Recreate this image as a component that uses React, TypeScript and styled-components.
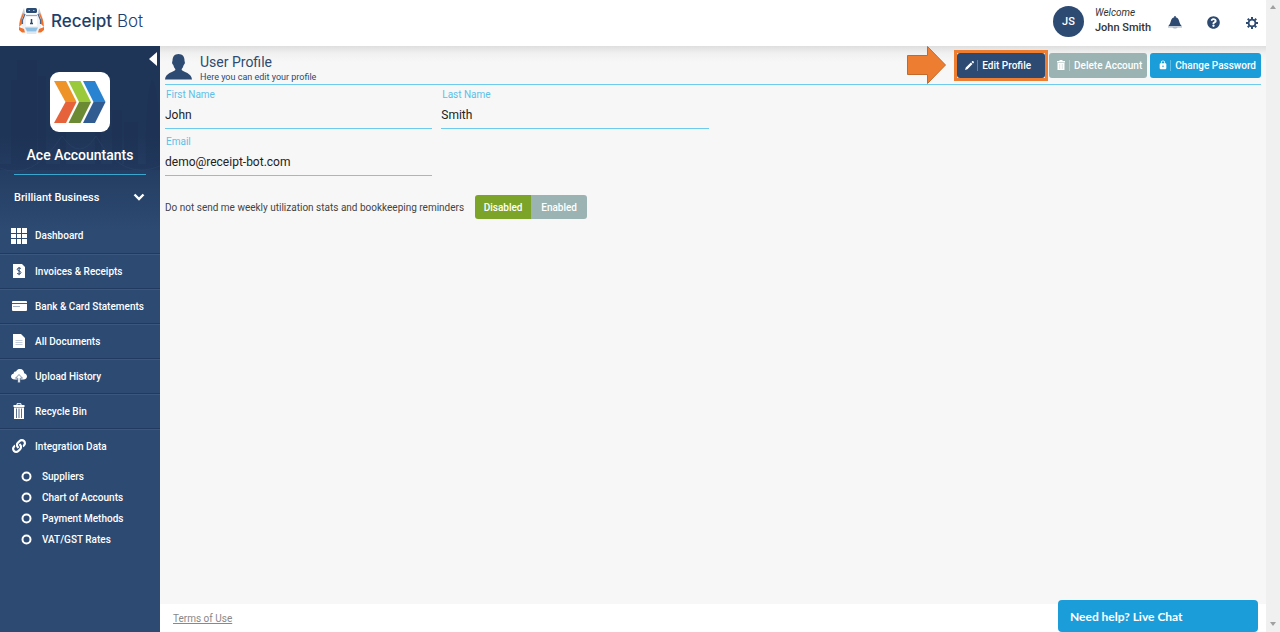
import React, { useState } from "react";
import styled, { createGlobalStyle } from "styled-components";
import { FaLink, FaQuestionCircle } from "react-icons/fa";
import { MdLock } from "react-icons/md";

const color = {
  navy: "#2d4a72",
  deep: "#1f3558",
  sky: "#6fcbee",
  blue: "#1b9dd9",
  sage: "#9bb3b3",
  green: "#7ba428",
  orange: "#ed7d31",
};

const Global = createGlobalStyle`
  *, *::before, *::after { box-sizing: border-box; }
  body { margin: 0; font-family: Roboto, "Liberation Sans", sans-serif; font-size: 10px; color: #333; background: #fff; }
  button, input { font: inherit; }
  button { cursor: pointer; }
  ul { list-style: none; margin: 0; padding: 0; }
  a { color: inherit; text-decoration: none; }
  svg { display: block; flex: none; }
`;

const Shell = styled.div`
  display: flex;
  min-height: 100vh;
`;
const Page = styled.div`
  flex: 1;
  min-width: 0;
  display: flex;
  flex-direction: column;
`;
const ScrollTrack = styled.div`
  width: 14px;
  background: #f0f0f0;
  display: flex;
  flex-direction: column;
  justify-content: space-between;
  align-items: center;
  padding: 5px 0 6px;
`;
const Header = styled.header`
  height: 46px;
  display: flex;
  align-items: center;
  justify-content: space-between;
  padding: 0 8px 0 18px;
  background: #fff;
`;
const Brand = styled.a`
  display: flex;
  align-items: center;
  gap: 6px;
  padding-bottom: 4px;
  font-family: Inter, Roboto, sans-serif;
  font-size: 17px;
  line-height: 20px;
  font-weight: 300;
  color: #243e6b;
`;
const Strong = styled.span`
  font-weight: 500;
`;
const Account = styled.div`
  display: flex;
  align-items: center;
  padding-bottom: 3px;
`;
const Avatar = styled.div`
  width: 31px;
  height: 31px;
  border-radius: 50%;
  background: ${color.navy};
  color: #fff;
  display: grid;
  place-items: center;
  font-size: 11px;
  font-weight: 500;
  margin-right: 11px;
`;
const Greeting = styled.div`
  width: 73px;
  padding-bottom: 3px;
  font-size: 11px;
  font-weight: 500;
  line-height: 15px;
`;
const Welcome = styled.div`
  font-size: 10px;
  font-weight: 400;
  font-style: italic;
`;
const HeaderIcons = styled.div`
  display: flex;
  gap: 24px;
  padding-top: 2px;
`;
const IconButton = styled.button`
  width: 14px;
  height: 24px;
  padding: 0;
  border: 0;
  background: none;
  color: ${color.navy};
  display: grid;
  place-items: center end;
`;

const Body = styled.div`
  flex: 1;
  display: flex;
`;
const Sidebar = styled.aside`
  position: relative;
  width: 160px;
  flex: none;
  background: linear-gradient(${color.deep} 0, ${color.deep} 90px, ${color.navy} 184px);
  color: #fff;
  font-weight: 500;
`;
const Skyline = styled.svg`
  position: absolute;
  top: 0;
  left: 0;
`;
const Collapse = styled.button`
  position: absolute;
  top: 6px;
  right: 2px;
  padding: 0;
  border: 0;
  background: none;
`;
const Company = styled.div`
  position: relative;
  margin: 0 14px;
  padding: 26px 0 10px;
  display: flex;
  flex-direction: column;
  align-items: center;
  gap: 14px;
  border-bottom: 1px solid #3aa6d0;
  font-size: 14px;
  line-height: 18px;
`;
const CompanyLogo = styled.div`
  width: 60px;
  height: 60px;
  border-radius: 9px;
  background: #fff;
  display: grid;
  place-items: center;
`;
const Business = styled.button`
  position: relative;
  width: 100%;
  height: 43px;
  padding: 1px 15px 0 14px;
  border: 0;
  background: none;
  color: #fff;
  display: flex;
  align-items: center;
  justify-content: space-between;
  font-size: 11px;
`;
const NavItem = styled.li`
  & + & {
    border-top: 1px solid #213a5f;
    box-shadow: inset 0 1px #3a5780;
  }
`;
const NavLink = styled.a`
  height: 35px;
  padding-left: 11px;
  display: grid;
  grid-template-columns: 16px 1fr;
  column-gap: 8px;
  align-items: center;
  li + li > & {
    height: 34px;
  }
`;
const NavIcon = styled.span`
  display: grid;
  place-items: center;
`;
const SubLink = styled.a`
  display: flex;
  align-items: center;
  gap: 10px;
  height: 21px;
  padding-left: 21px;
`;
const SubList = styled.ul`
  padding-top: 3px;
`;

const Content = styled.div`
  flex: 1;
  min-width: 0;
  display: flex;
  flex-direction: column;
`;
const Main = styled.main`
  flex: 1;
  padding: 0 5px;
  background: linear-gradient(#dedede 0, #f0f0f0 7px, #f7f7f7 16px);
`;
const TitleBar = styled.div`
  height: 39px;
  display: flex;
  align-items: center;
  justify-content: space-between;
  border-bottom: 1px solid ${color.sky};
`;
const Title = styled.div`
  display: flex;
  align-items: center;
  gap: 8px;
  padding-top: 3px;
  color: ${color.navy};
`;
const TitleText = styled.div`
  padding-top: 3px;
`;
const Heading = styled.h1`
  margin: 0;
  font-size: 14px;
  line-height: 17px;
  font-weight: 400;
`;
const Hint = styled.p`
  margin: 0;
  font-size: 9px;
  line-height: 12px;
`;
const Actions = styled.div`
  display: flex;
  align-items: center;
`;
const Highlight = styled.div`
  border: 3px solid ${color.orange};
  margin-left: 8px;
  margin-right: 1px;
`;
const ActionButton = styled.button<{ $bg: string; $gap?: number; $wide?: boolean }>`
  height: 25px;
  margin-left: ${(p) => p.$gap ?? 0}px;
  padding: 0 ${(p) => (p.$wide ? 14 : 5)}px 0 8px;
  border: 0;
  border-radius: 3px;
  background: ${(p) => p.$bg};
  color: #fff;
  display: grid;
  grid-template-columns: 9px auto;
  column-gap: 3px;
  align-items: center;
  font-weight: 500;
  white-space: nowrap;
`;
const ActionLabel = styled.span`
  padding-left: 4px;
  border-left: 1px solid rgba(255, 255, 255, 0.3);
`;
const Form = styled.form`
  display: grid;
  grid-template-columns: repeat(4, 1fr);
  column-gap: 9px;
`;
const Field = styled.div<{ $start?: boolean }>`
  height: 47px;
  padding-top: 3px;
  grid-column: ${(p) => (p.$start ? "1" : "auto")};
`;
const FieldLabel = styled.label`
  display: block;
  padding-left: 1px;
  line-height: 14px;
  color: #5bc0e8;
`;
const FieldInput = styled.input`
  width: 100%;
  height: 27px;
  padding: 0;
  border: 0;
  border-bottom: 1px solid ${color.sky};
  background: none;
  outline: 0;
  color: #222;
  font-size: 12px;
`;
const Preference = styled.div`
  display: flex;
  align-items: center;
  gap: 11px;
  margin-top: 16px;
  color: #444;
`;
const Toggle = styled.div`
  display: flex;
  border-radius: 3px;
  overflow: hidden;
`;
const ToggleButton = styled.button<{ $on: boolean }>`
  width: 56px;
  height: 24px;
  padding: 0;
  border: 0;
  background: ${(p) => (p.$on ? color.green : color.sage)};
  color: #fff;
  font-weight: 500;
`;
const Footer = styled.footer`
  height: 28px;
  padding: 1px 8px 0 13px;
  display: flex;
  align-items: center;
  background: #fff;
  color: #888;
`;
const Terms = styled.a`
  text-decoration: underline;
`;
const Chat = styled.button`
  position: fixed;
  right: 22px;
  bottom: 0;
  width: 200px;
  height: 32px;
  padding: 0 12px;
  border: 0;
  border-radius: 4px;
  background: ${color.blue};
  color: #fff;
  text-align: left;
  font-family: Lato, sans-serif;
  font-size: 12px;
  font-weight: 700;
`;

const RobotLogo = () => (
  <svg width="27" height="28" viewBox="0 0 27 28">
    <path d="M6 1 3 9l-2 9 4-5 2-7z" fill="#c9ced6" />
    <path d="m21 1 3 8 2 9-4-5-2-7z" fill="#c9ced6" />
    <path d="M5 6 2 13l-1 7 4-4 2-8zM22 6l3 7 1 7-4-4-2-8z" fill="#f0702a" />
    <path d="M6 7h15l2 5v11l-5 4H9l-5-4V12z" fill="#eef1f5" />
    <path d="M7 7 4.500 13v4M20 7l2.500 6v4" fill="none" stroke="#4f6385" strokeWidth="1.200" />
    <rect x="8" y="1" width="11" height="5" rx="1.500" fill="#2d4a72" />
    <path d="M10.500 3.500h1.500m3 0h1.500" stroke="#7fc4ec" />
    <path d="M8 8.500h11" stroke="#9aa7bb" />
    <rect x="8" y="10" width="11" height="9" rx="1" fill="#fff" />
    <path d="M13.500 12v5m-1.500-.5h3" stroke="#2d4a72" strokeWidth="1.500" />
    <path d="m1 20 5 2 1 3.500H4L1 23zM26 20l-5 2-1 3.500h3l3-2.500z" fill="#f0702a" />
    <path d="M7 20.500h13l-2 4H9z" fill="#8fc0e4" />
    <path d="M9 26h9" stroke="#cddff0" />
  </svg>
);
const Chevrons = () => (
  <svg width="52" height="44" viewBox="0 0 52 44">
    <path d="M0 1h12l10.500 21H11.500z" fill="#ee9327" />
    <path d="M11.500 22h11L12 43H0z" fill="#e5623b" />
    <path d="M14.500 1h12L37 22H25z" fill="#9aca3b" />
    <path d="M25 22h12L26.500 43h-12z" fill="#6c8a34" />
    <path d="M29 1h12l10.500 21h-12z" fill="#2983d0" />
    <path d="M39.500 22h12L41 43H29z" fill="#305c92" />
  </svg>
);
const City = () => (
  <Skyline width="160" height="180" viewBox="0 0 160 180" aria-hidden="true">
    <g fill="#16294a" opacity="0.18">
      <path d="M17 14h20v110H11V34h6zM38 30h8v94h-8zM112 64h10v60h-10zM124 76h14v48h-14z" />
      <path d="M152 34c6 6 8 40 8 90h-14c-1-40 1-80 6-90z" />
      <path d="M0 118h160v6H0zM60 84h6v40h-6zM95 84h6v40h-6z" />
    </g>
    <path d="M0 122q32 14 62-32 18 26 34 0 26 46 64 30" fill="none" stroke="#4a6690" opacity="0.15" />
  </Skyline>
);
const ChevronIcon = () => (
  <svg width="12" height="8" viewBox="0 0 12 8">
    <path d="m1.500 1.500 4.500 4.500 4.500-4.500" fill="none" stroke="#fff" strokeWidth="2.400" />
  </svg>
);
const GridIcon = () => (
  <svg width="16" height="16" viewBox="0 0 16 16" fill="#fff">
    <path d="M0 0h5v5H0zM6 0h4v5H6zM11 0h5v5h-5zM0 6h5v4H0zM6 6h4v4H6zM11 6h5v4h-5zM0 11h5v5H0zM6 11h4v5H6zM11 11h5v5h-5z" />
  </svg>
);
const InvoiceIcon = () => (
  <svg width="12" height="14" viewBox="0 0 12 14">
    <path d="M0 0h9l3 3v11H0z" fill="#fff" />
    <path d="M8 4.700C7.500 3.800 4.200 3.600 4.200 5.300S8 6.800 8 8.600 4.500 10.300 4 9.200M6.100 3v8.200" fill="none" stroke={color.navy} />
  </svg>
);
const CardIcon = () => (
  <svg width="15" height="12" viewBox="0 0 15 12">
    <rect y="1" width="15" height="10" rx="1" fill="#fff" />
    <path d="M0 3.500h15" stroke={color.navy} strokeWidth="0.900" />
    <path d="M1 6.500h7" stroke="#9fb0c8" />
  </svg>
);
const DocIcon = () => (
  <svg width="12" height="14" viewBox="0 0 12 14">
    <path d="M0 0h8l4 4v10H0z" fill="#fff" />
    <path d="M2.500 6.500h7m-7 2h7m-7 2h7" stroke="#c3ccdb" />
  </svg>
);
const CloudIcon = () => (
  <svg width="16" height="14" viewBox="0 0 16 14">
    <path d="M4 10.500C1 10.500 0 9 0 7.500S1.300 5 2.500 4.800C2.700 2.800 4 2.300 5 2.500 6 .6 7.500 0 9 0c2.600 0 4.200 2 4.200 4.300C15 4.700 16 6 16 7.500s-1.200 3-3.500 3z" fill="#fff" />
    <path d="M8 5.500 4.500 9.200h2.300v4.500h2.400V9.200h2.300z" fill="#fff" stroke={color.navy} strokeWidth="0.600" />
  </svg>
);
const BinIcon = () => (
  <svg width="12" height="16" viewBox="0 0 12 16">
    <path d="M4 2V.7h4V2" fill="none" stroke="#fff" />
    <path d="M.5 2h11v2H.5zM1 4.500h10V16H1z" fill="#fff" />
    <path d="M3.500 5.500V15M6 5.500V15M8.500 5.500V15" stroke={color.navy} strokeWidth="0.800" />
  </svg>
);
const TrashIcon = () => (
  <svg width="8" height="10" viewBox="0 0 8 10">
    <path d="M2.500 0h3v1H8v1.500H0V1h2.500zM.5 3h7v7h-7z" fill="#fff" />
    <path d="M2.700 4v5M5.300 4v5" stroke="#cdd9d9" strokeWidth="0.700" />
  </svg>
);
const Ring = () => (
  <svg width="11" height="11" viewBox="0 0 11 11">
    <circle cx="5.500" cy="5.500" r="4" fill="none" stroke="#fff" strokeWidth="2" />
  </svg>
);
const BellIcon = () => (
  <svg width="14" height="13" viewBox="0 0 14 13" fill="currentColor">
    <path d="M6.300 0h1.400v1.300c2 .4 2.900 1.900 3.500 3.900.6 2 1.200 3.500 2.500 4.800H.3c1.300-1.300 1.900-2.800 2.500-4.800.6-2 1.500-3.500 3.500-3.900z" />
    <path d="M0 10.500h14v.9H0z" opacity=".55" />
    <path d="M4.500 11.400h5c-.5 1.300-4.500 1.300-5 0z" opacity=".4" />
  </svg>
);
const GearIcon = () => (
  <svg width="12" height="12" viewBox="0 0 12 12" fill="none" stroke="currentColor">
    <circle cx="6" cy="6" r="3.400" strokeWidth="1.800" />
    <path d="M6 0v2M6 10v2M0 6h2M10 6h2M1.750 1.750l1.500 1.500M8.750 8.750l1.500 1.500M10.250 1.750l-1.500 1.500M3.250 8.750l-1.500 1.500" strokeWidth="2" />
  </svg>
);
const PersonIcon = () => (
  <svg width="27" height="26" viewBox="0 0 27 26" fill="currentColor">
    <path d="M13.500 0c4 0 6 2.800 6 6.500 0 1 .4 1.200.4 2.200 0 1.200-.7 1.700-1.200 2.200-.5 2-1.200 3.200-2 4v1.200c2 2 9.800 3 10.300 9.400H0c.5-6.400 8.300-7.400 10.300-9.400v-1.200c-.8-.8-1.500-2-2-4-.5-.5-1.200-1-1.200-2.200 0-1 .4-1.200.4-2.200C7.500 2.800 9.500 0 13.500 0z" />
  </svg>
);
const PencilIcon = () => (
  <svg width="9" height="9" viewBox="0 0 9 9" fill="#fff">
    <path d="M0 9 .8 6.600 5.900 1.500l1.600 1.600-5.100 5.100zM6.500.9l.7-.7c.8-.6 2.200.8 1.600 1.600l-.7.7z" />
  </svg>
);
const ArrowIcon = () => (
  <svg width="39" height="38" viewBox="0 0 39 38">
    <path d="M.5 9.500h20v-9l18 18.500-18 18.500v-9H.5z" fill={color.orange} stroke="#c4692c" />
  </svg>
);
const ScrollArrow = ({ down }: { down?: boolean }) => (
  <svg width="6" height="4" viewBox="0 0 6 4">
    <path d={down ? "M0 0h6L3 4z" : "M0 4h6L3 0z"} fill="#a0a0a0" />
  </svg>
);

const navItems = [
  { label: "Dashboard", icon: <GridIcon /> },
  { label: "Invoices & Receipts", icon: <InvoiceIcon /> },
  { label: "Bank & Card Statements", icon: <CardIcon /> },
  { label: "All Documents", icon: <DocIcon /> },
  { label: "Upload History", icon: <CloudIcon /> },
  { label: "Recycle Bin", icon: <BinIcon /> },
  {
    label: "Integration Data",
    icon: <FaLink size={14} />,
    children: ["Suppliers", "Chart of Accounts", "Payment Methods", "VAT/GST Rates"],
  },
];

export default function App() {
  const [enabled, setEnabled] = useState(false);
  return (
    <Shell>
      <Global />
      <Page>
        <Header>
          <Brand href="#">
            <RobotLogo />
            <span><Strong>Receipt</Strong> Bot</span>
          </Brand>
          <Account>
            <Avatar>JS</Avatar>
            <Greeting>
              <Welcome>Welcome</Welcome>
              John Smith
            </Greeting>
            <HeaderIcons>
              <IconButton aria-label="Notifications"><BellIcon /></IconButton>
              <IconButton aria-label="Help"><FaQuestionCircle size={13} /></IconButton>
              <IconButton aria-label="Settings"><GearIcon /></IconButton>
            </HeaderIcons>
          </Account>
        </Header>
        <Body>
          <Sidebar>
            <City />
            <Collapse aria-label="Collapse menu">
              <svg width="9" height="14" viewBox="0 0 9 14"><path d="M8 0v14L0 7z" fill="#fff" /></svg>
            </Collapse>
            <Company>
              <CompanyLogo><Chevrons /></CompanyLogo>
              Ace Accountants
            </Company>
            <Business>
              Brilliant Business
              <ChevronIcon />
            </Business>
            <nav>
              <ul>
                {navItems.map((item) => (
                  <NavItem key={item.label}>
                    <NavLink href="#">
                      <NavIcon>{item.icon}</NavIcon>
                      {item.label}
                    </NavLink>
                    {item.children && (
                      <SubList>
                        {item.children.map((c) => (
                          <li key={c}><SubLink href="#"><Ring />{c}</SubLink></li>
                        ))}
                      </SubList>
                    )}
                  </NavItem>
                ))}
              </ul>
            </nav>
          </Sidebar>
          <Content>
            <Main>
              <TitleBar>
                <Title>
                  <PersonIcon />
                  <TitleText>
                    <Heading>User Profile</Heading>
                    <Hint>Here you can edit your profile</Hint>
                  </TitleText>
                </Title>
                <Actions>
                  <ArrowIcon />
                  <Highlight>
                    <ActionButton $bg={color.navy} $wide><PencilIcon /><ActionLabel>Edit Profile</ActionLabel></ActionButton>
                  </Highlight>
                  <ActionButton $bg={color.sage}><TrashIcon /><ActionLabel>Delete Account</ActionLabel></ActionButton>
                  <ActionButton $bg={color.blue} $gap={3}><MdLock size={10} /><ActionLabel>Change Password</ActionLabel></ActionButton>
                </Actions>
              </TitleBar>
              <Form>
                <Field>
                  <FieldLabel htmlFor="first">First Name</FieldLabel>
                  <FieldInput id="first" defaultValue="John" />
                </Field>
                <Field>
                  <FieldLabel htmlFor="last">Last Name</FieldLabel>
                  <FieldInput id="last" defaultValue="Smith" />
                </Field>
                <Field $start>
                  <FieldLabel htmlFor="email">Email</FieldLabel>
                  <FieldInput id="email" type="email" defaultValue="demo@receipt-bot.com" />
                </Field>
              </Form>
              <Preference>
                <span>Do not send me weekly utilization stats and bookkeeping reminders</span>
                <Toggle>
                  <ToggleButton $on={!enabled} onClick={() => setEnabled(false)}>Disabled</ToggleButton>
                  <ToggleButton $on={enabled} onClick={() => setEnabled(true)}>Enabled</ToggleButton>
                </Toggle>
              </Preference>
            </Main>
            <Footer><Terms href="#">Terms of Use</Terms></Footer>
          </Content>
        </Body>
      </Page>
      <ScrollTrack><ScrollArrow /><ScrollArrow down /></ScrollTrack>
      <Chat>Need help? Live Chat</Chat>
    </Shell>
  );
}
